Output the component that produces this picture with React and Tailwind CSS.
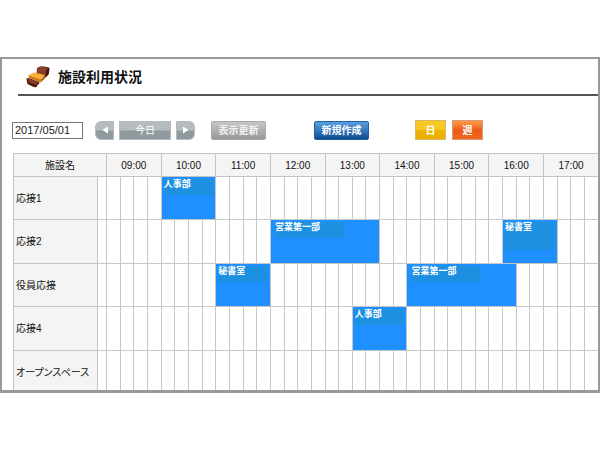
import React from 'react';

const QUARTERS_PER_HOUR = 4;
const hours = ['09:00', '10:00', '11:00', '12:00', '13:00', '14:00', '15:00', '16:00', '17:00'];

// start / span are counted in 15 minute slots from 09:00
const facilities = [
    { name: '応接1', bookings: [{ title: '人事部', start: 4, span: 4 }] },
    {
        name: '応接2',
        bookings: [
            { title: '営業第一部', start: 12, span: 8 },
            { title: '秘書室', start: 29, span: 4, tall: true },
        ],
    },
    {
        name: '役員応接',
        bookings: [
            { title: '秘書室', start: 8, span: 4 },
            { title: '営業第一部', start: 22, span: 8 },
        ],
    },
    { name: '応接4', bookings: [{ title: '人事部', start: 18, span: 4 }] },
    { name: 'オープンスペース', bookings: [] },
];

function FurnitureIcon() {
    return (
        <svg viewBox="0 0 24 22" className="h-[22px] w-6" aria-hidden="true">
            {/* armchair */}
            <path d="M11 2.500 12.500 1 16 .3l6.500 1 1 1.200-.7 5.500-2.800 3.500-3-.5-6.500-3z" fill="#6a2816" />
            <path d="m11.500 2.500 3-1.700 7 .9-1.500 3.300-1 4-8-1.500z" fill="#86402b" />
            <path d="m20.500 4.500 2.800-2.200-.8 5.700-2.500 3z" fill="#431208" />
            {/* table */}
            <path d="m2.500 9 .5 3 11.500 4.500.5-3.500z" fill="#d07a10" />
            <path d="m15 13 4-4v3.500l-4.500 4z" fill="#b8620c" />
            <path d="m2.500 9 5.500-2.500L19 9l-4 4.200z" fill="#fbb03c" />
            {/* stool */}
            <path d="m.3 12.800 2.200-.8 10.500 4 .5 1.500-1.800 1.200-1.200 2.600-3-.4L1.500 18z" fill="#571c0e" />
            <path d="m1 13 2-.6 9 3.600-1.500 2.500L4 16.500z" fill="#84402c" />
        </svg>
    );
}

function Arrow({ d }) {
    return (
        <svg viewBox="0 0 6 8" className="h-2 w-1.5 fill-white" aria-hidden="true">
            <path d={d} />
        </svg>
    );
}

function Toolbar() {
    const gray = 'flex h-[19px] items-center justify-center border border-[#b4babd] bg-linear-to-b from-[#b4bcc0] from-45% to-[#8f9a9f] to-55% text-white';
    return (
        <div className="flex items-center pl-[10px]">
            <input
                type="text"
                aria-label="日付"
                defaultValue="2017/05/01"
                className="h-[17px] w-[71px] border border-[#777] bg-white px-0.5 text-[11px] leading-none text-[#222] outline-none"
            />
            <div className="ml-3 flex gap-[5px]">
                <button type="button" aria-label="前日" className={`${gray} w-[19px] rounded-l-md`}>
                    <Arrow d="M6 .5v7L.5 4z" />
                </button>
                <button type="button" className={`${gray} w-[52px]`}>今日</button>
                <button type="button" aria-label="翌日" className={`${gray} w-[19px] rounded-r-md`}>
                    <Arrow d="M0 .5v7L5.500 4z" />
                </button>
            </div>
            <button type="button" className="ml-4 h-[19px] w-[55px] rounded-xs border border-[#a8a8a8] bg-linear-to-b from-[#c4c6c8] to-[#999] font-bold text-[#f2f2f2]">
                表示更新
            </button>
            <button type="button" className="ml-12 h-[19px] w-[55px] rounded-xs border border-[#1f5fa5] bg-linear-to-b from-[#5b9fdf] via-[#3279bd] to-[#0f4a8c] font-bold text-white">
                新規作成
            </button>
            <button type="button" className="ml-[46px] h-5 w-[31px] border border-[#d8b868] bg-linear-to-b from-[#f5c822] from-45% to-[#ecb000] to-55% font-bold text-white">
                日
            </button>
            <button type="button" className="ml-1.5 h-5 w-[31px] border border-[#d69a80] bg-linear-to-b from-[#ff9040] from-10% via-[#e95a14] via-50% to-[#f0681c] font-bold text-white">
                週
            </button>
        </div>
    );
}

function Slots({ bookings }) {
    const cells = [];
    let slot = 0;
    while (slot < hours.length * QUARTERS_PER_HOUR) {
        const booking = bookings.find((b) => b.start === slot);
        if (booking) {
            cells.push(
                <td
                    key={slot}
                    colSpan={booking.span}
                    className={`border border-[#c4c4c4] bg-[#1e90ff] pt-0.5 align-top ${booking.span > 4 ? 'px-1' : 'px-0.5'}`}
                >
                    <div className={`max-w-[70px] bg-[#1e90e1] text-[9px] leading-[11px] font-bold text-white ${booking.tall ? 'h-7' : 'h-4'}`}>
                        {booking.title}
                    </div>
                </td>
            );
            slot += booking.span;
        } else {
            cells.push(<td key={slot} className="border border-[#c8c8c8]" />);
            slot += 1;
        }
    }
    return cells;
}

function Schedule() {
    return (
        <table className="w-full table-fixed border-collapse text-[10px] text-[#111]">
            <colgroup>
                <col className="w-[84px]" />
                <col className="w-[9px]" />
                <col span={hours.length * QUARTERS_PER_HOUR} />
            </colgroup>
            <thead>
                <tr className="h-[23px] bg-[#f4f4f4]">
                    <th colSpan={2} className="border border-[#c4c4c4] font-normal">施設名</th>
                    {hours.map((hour) => (
                        <th key={hour} colSpan={QUARTERS_PER_HOUR} className="border border-[#c4c4c4] font-normal">
                            {hour}
                        </th>
                    ))}
                </tr>
            </thead>
            <tbody>
                {facilities.map((facility) => (
                    <tr key={facility.name} className="h-[43px] even:h-11">
                        <th scope="row" className="border border-[#c4c4c4] bg-[#f4f4f4] pl-0.5 text-left font-normal whitespace-nowrap [font-feature-settings:'palt']">
                            {facility.name}
                        </th>
                        <td className="border border-[#c8c8c8]" />
                        <Slots bookings={facility.bookings} />
                    </tr>
                ))}
            </tbody>
        </table>
    );
}

export default function App() {
    return (
        <div className="min-h-screen bg-white pt-[57px] font-['Liberation_Sans','Noto_Sans_CJK_JP',sans-serif] text-[10px]">
            <main className="overflow-hidden border-2 border-b-3 border-[#999]">
                <header className="ml-4 flex h-[37px] items-center gap-2 border-b-2 border-[#555] pl-2">
                    <FurnitureIcon />
                    <h1 className="text-sm font-bold text-[#111]">施設利用状況</h1>
                </header>
                <div className="pt-6 pb-[13px]">
                    <Toolbar />
                </div>
                {/* the last row runs on below the frame */}
                <div className="-mr-px -mb-1 ml-[11px]">
                    <Schedule />
                </div>
            </main>
        </div>
    );
}
